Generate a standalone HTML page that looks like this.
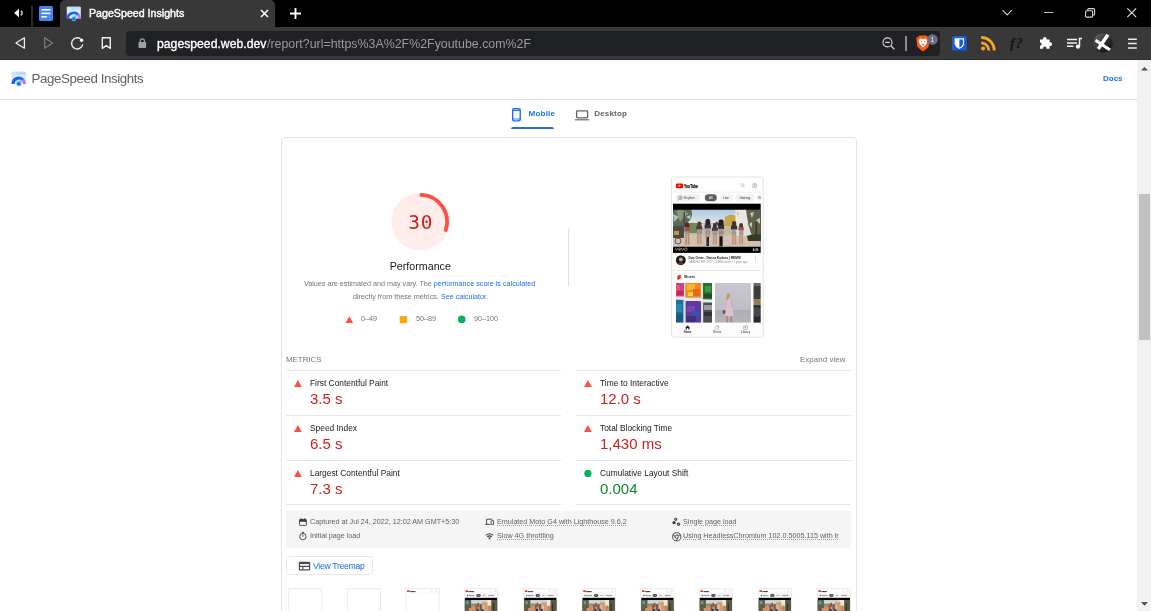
<!DOCTYPE html>
<html lang="en">
<head>
<meta charset="utf-8">
<title>PageSpeed Insights</title>
<style>
*{box-sizing:border-box;margin:0;padding:0}
html,body{width:1151px;height:611px;overflow:hidden;background:#fff}
body{position:relative;font-family:"Liberation Sans",Arial,sans-serif;color:#212121;-webkit-font-smoothing:antialiased}
.a{position:absolute;white-space:nowrap;line-height:1}
#root{position:absolute;left:0;top:0;width:1151px;height:611px;overflow:hidden;will-change:transform}
svg{position:absolute;overflow:visible}
/* browser chrome */
#tabbar{left:0;top:0;width:1151px;height:27px;background:#000}
#toolbar{left:0;top:27px;width:1151px;height:33px;background:#383838;border-bottom:1px solid #2f2f2f}
#tab{left:59.5px;top:0;width:215.5px;height:28px;background:#383838;border-radius:5px 5px 0 0}
#tabtitle{left:88.5px;top:7.5px;font-size:11.5px;color:#fff;-webkit-text-stroke:.42px #fff;transform:scaleX(.926);transform-origin:0 0}
#urlbox{left:126px;top:31px;width:814px;height:25px;background:#202124;border-radius:4px}
#urlb{left:157px;top:36.5px;font-size:13.4px;color:#fff;-webkit-text-stroke:.35px #fff;transform:scaleX(.912);transform-origin:0 0}
#url{left:266.6px;top:36.5px;font-size:13.4px;color:#9b9b9b;transform:scaleX(.925);transform-origin:0 0}
/* page */
#hdrline{left:0;top:99px;width:1137px;height:1px;background:#dadce0}
#psi{left:31.5px;top:71.5px;font-size:13.3px;color:#5f6368;letter-spacing:-.4px}
#docs{left:1103px;top:75.4px;font-size:8px;font-weight:bold;color:#1a73e8}
#sbar{left:1137px;top:60px;width:14px;height:551px;background:#f1f1f1}
#sthumb{left:1139px;top:194px;width:11px;height:146px;background:#c1c1c1}
.tabl{font-size:8px;font-weight:bold;letter-spacing:.2px}
#card{left:281px;top:137px;width:576px;height:500px;border:1px solid #e0e2e6;border-radius:4px}
.grey{color:#757575}
.lnk{color:#1a73e8}
.div{height:1px;background:#e6e6e6}
.ml{font-size:8.4px;color:#212121}
.mv{font-size:15px;color:#c7221f}
.meta{font-size:7.2px;color:#616161}
.meta u{text-decoration:underline dotted #9e9e9e;text-underline-offset:1px}
.fs{top:588px;width:34px;height:60px;border:1px solid #e4e4e4;background:#fff;overflow:hidden}
</style>
</head>
<body>
<div id="root">
<!-- ===== browser chrome ===== -->
<div class="a" id="tabbar"></div>
<div class="a" id="toolbar"></div>
<div class="a" id="tab"></div>
<div class="a" id="tabtitle">PageSpeed Insights</div>
<div class="a" id="urlbox"></div>
<div class="a" id="urlb">pagespeed.web.dev</div>
<div class="a" id="url">/report?url=https%3A%2F%2Fyoutube.com%2F</div>
<!-- speaker -->
<svg style="left:13px;top:7px" width="12" height="12" viewBox="0 0 12 12"><path d="M1.2 6 L6 1.7 V10.3 Z" fill="#fff"/><path d="M8 3.4 Q10 6 8 8.6" fill="none" stroke="#b0b0b0" stroke-width="1.7"/></svg>
<div class="a" style="left:31px;top:6px;width:2px;height:21px;background:#2b2b2b"></div>
<!-- blue doc -->
<svg style="left:39px;top:6px" width="14" height="15" viewBox="0 0 14 15"><rect width="14" height="15" rx="1.6" fill="#4285f4"/><rect x="2.4" y="3" width="9" height="1.6" fill="#fff"/><rect x="2.4" y="6.6" width="9" height="1.6" fill="#fff"/><rect x="2.4" y="10" width="5.6" height="1.6" fill="#fff"/></svg>
<!-- tab close / new tab -->
<svg style="left:260px;top:9px" width="9" height="9" viewBox="0 0 9 9"><path d="M1 1 L8 8 M8 1 L1 8" stroke="#fff" stroke-width="1.55" fill="none"/></svg>
<svg style="left:290px;top:8px" width="11" height="11" viewBox="0 0 11 11"><path d="M5.5 0 V11 M0 5.5 H11" stroke="#fff" stroke-width="1.85" fill="none"/></svg>
<!-- nav -->
<svg style="left:14px;top:36px" width="13" height="14" viewBox="0 0 13 14"><path d="M10.4 1.8 V12.2 L1.9 7 Z" fill="none" stroke="#ededed" stroke-width="1.3" stroke-linejoin="round"/></svg>
<svg style="left:43px;top:36px" width="13" height="14" viewBox="0 0 13 14"><path d="M1.6 1.8 V12.2 L9.6 7 Z" fill="none" stroke="#7c7c7c" stroke-width="1.2" stroke-linejoin="round"/></svg>
<svg style="left:70px;top:36px" width="15" height="15" viewBox="0 0 15 15"><path d="M10.4 2.7 A5.6 5.6 0 1 0 12.7 8.4" fill="none" stroke="#f0f0f0" stroke-width="1.4"/><circle cx="11.6" cy="4.2" r="1.7" fill="#fff"/></svg>
<svg style="left:101px;top:36px" width="11" height="14" viewBox="0 0 11 14"><path d="M1.3 1.7 H9.3 V12.3 L5.3 9.6 L1.3 12.3 Z" fill="none" stroke="#f0f0f0" stroke-width="1.4" stroke-linejoin="round"/></svg>
<!-- lock -->
<svg style="left:138px;top:38px" width="9" height="11" viewBox="0 0 9 11"><rect x=".5" y="4" width="7.6" height="6" rx=".8" fill="#9aa0a6"/><path d="M2.2 4.4 V3 A2.1 2.1 0 0 1 6.4 3 V4.4" fill="none" stroke="#9aa0a6" stroke-width="1.2"/></svg>
<!-- favicon -->
<svg style="left:66px;top:5.6px" width="16" height="16" viewBox="0 0 16 16"><rect x=".8" y=".8" width="14" height="11.6" rx=".8" fill="#dcebfd"/><path d="M.8 1.6 a.8 .8 0 0 1 .8 -.8 h12.4 a.8 .8 0 0 1 .8 .8 v2 h-14 z" fill="#bbd8fb"/><rect x="1.8" y="1.6" width="3" height="1" fill="#e6f1fe"/><path d="M1.7 12.9 A6.1 6.1 0 0 1 12.3 8.8" fill="none" stroke="#1a61f2" stroke-width="2.5"/><path d="M12.3 8.8 A6.1 6.1 0 0 1 13.9 12.9" fill="none" stroke="#c56cf0" stroke-width="2.5"/><path d="M7.8 10 L11 8.6 L9.8 12.4 Z" fill="#5cc6fa"/><circle cx="7.8" cy="12.9" r="2.3" fill="#4fbdf8"/><circle cx="7.8" cy="13" r="1.4" fill="#1a61f2"/></svg>
<!-- zoom-out -->
<svg style="left:881px;top:36px" width="15" height="15" viewBox="0 0 15 15"><circle cx="6.5" cy="6.4" r="4.5" fill="none" stroke="#d6d6d6" stroke-width="1.1"/><path d="M9.8 9.8 L13.4 13.3" stroke="#d6d6d6" stroke-width="1.2" fill="none"/><path d="M4.2 6.4 H8.8" stroke="#d6d6d6" stroke-width="1.2"/></svg>
<div class="a" style="left:905px;top:36px;width:1.5px;height:14.5px;background:#8c8c8c"></div>
<!-- brave -->
<svg style="left:916px;top:34.5px" width="14" height="17" viewBox="0 0 14 17"><path d="M3.2 .6 H10.8 L12.2 2.2 L13.4 2 L13.6 4.2 L12.8 11 Q12.4 12.6 7 16.6 Q1.6 12.6 1.2 11 L.4 4.2 L.6 2 L1.8 2.2 Z" fill="#ff5714"/><path d="M4.2 3.4 L7 4 L9.8 3.4 L11.4 5.4 L10.6 8.6 L8.6 11.2 L7 12.6 L5.4 11.2 L3.4 8.6 L2.6 5.4 Z" fill="#fff"/><path d="M4.4 5.6 L6 6.4 L5.4 7.6 Z M9.6 5.6 L8 6.4 L8.6 7.6 Z M7 8 L8 10 L7 11 L6 10 Z" fill="#ff5714"/></svg>
<svg style="left:927px;top:34.3px" width="11" height="11" viewBox="0 0 11 11"><circle cx="5.5" cy="5.5" r="5.3" fill="#6b6e7f"/><text x="5.4" y="8" font-size="6.6" font-family="Liberation Sans, sans-serif" fill="#f4f4f4" text-anchor="middle">1</text></svg>
<!-- bitwarden -->
<svg style="left:952px;top:36px" width="15" height="15" viewBox="0 0 15 15"><rect width="14.7" height="14.6" rx="1.6" fill="#175ddc"/><path d="M2.6 2.2 H12.1 V7.4 Q12.1 10.6 7.35 13 Q2.6 10.6 2.6 7.4 Z" fill="#fff"/><path d="M7.35 3.4 H10.9 V7.4 Q10.9 9.8 7.35 11.7 Z" fill="#175ddc"/></svg>
<!-- rss -->
<svg style="left:981px;top:36px" width="15" height="15" viewBox="0 0 15 15"><circle cx="2.1" cy="12.5" r="2" fill="#f9a426"/><path d="M.2 6.9 A7.6 7.6 0 0 1 7.8 14.5" fill="none" stroke="#f9a426" stroke-width="2.7"/><path d="M.2 1.5 A13 13 0 0 1 13.2 14.5" fill="none" stroke="#f9a426" stroke-width="2.8"/></svg>
<!-- f? -->
<div class="a" style="left:1010px;top:36.2px;font-family:'Liberation Serif',serif;font-style:italic;font-weight:bold;font-size:15px;color:#141414;letter-spacing:.5px">f?</div>
<!-- puzzle -->
<svg style="left:1039px;top:36px" width="14" height="13" viewBox="0 0 14 13"><path d="M1 3.6 H4 A1.9 1.9 0 1 1 7.6 3.6 H10.6 V6.3 A1.9 1.9 0 1 1 10.6 9.9 V12.8 H7.4 A1.7 1.7 0 1 0 4.2 12.8 H1 V9.8 A1.7 1.7 0 1 0 1 6.4 Z" fill="#fff"/></svg>
<!-- music queue -->
<svg style="left:1067px;top:37px" width="16" height="13" viewBox="0 0 16 13"><path d="M0 2.4 H10 M0 5.9 H10 M0 9.3 H6.4" stroke="#f2f2f2" stroke-width="1.5" fill="none"/><path d="M12.5 9.6 V1.5 H15" stroke="#f2f2f2" stroke-width="1.5" fill="none"/><circle cx="10.9" cy="9.7" r="2.1" fill="#f2f2f2"/></svg>
<!-- avatar -->
<svg style="left:1093px;top:33px" width="20" height="20" viewBox="0 0 20 20"><defs><linearGradient id="av" x1="0" y1="0" x2="1" y2="1"><stop offset="0" stop-color="#6a6c72"/><stop offset=".55" stop-color="#2a2c30"/><stop offset="1" stop-color="#0c0d0f"/></linearGradient><clipPath id="avc"><circle cx="10" cy="10" r="9.8"/></clipPath></defs><circle cx="10" cy="10" r="9.8" fill="url(#av)"/><g clip-path="url(#avc)"><path d="M15.4 1 L5.2 16" stroke="#fff" stroke-width="3.5"/><path d="M2.6 7.2 L17.4 17.2" stroke="#fff" stroke-width="3.1"/></g></svg>
<!-- menu -->
<svg style="left:1128px;top:38px" width="9" height="11" viewBox="0 0 9 11"><path d="M0 1.2 H8.8 M0 5.5 H8.8 M0 9.9 H8.8" stroke="#ececec" stroke-width="1.5"/></svg>
<!-- window controls -->
<svg style="left:1002px;top:9px" width="11" height="7" viewBox="0 0 11 7"><path d="M.5 1.2 L5.2 5.9 L9.9 1.2" fill="none" stroke="#cfcfcf" stroke-width="1.1"/></svg>
<div class="a" style="left:1044px;top:12.2px;width:9.4px;height:1.3px;background:#c4c4c4"></div>
<svg style="left:1085px;top:7.5px" width="11" height="10" viewBox="0 0 11 10"><rect x=".6" y="2.7" width="7" height="6.4" rx="1" fill="none" stroke="#d8d8d8" stroke-width="1.1"/><path d="M2.8 2.4 V1.6 A1 1 0 0 1 3.8 .6 H8.6 A1 1 0 0 1 9.6 1.6 V6 A1 1 0 0 1 8.6 7 H7.9" fill="none" stroke="#d8d8d8" stroke-width="1.1"/></svg>
<svg style="left:1127px;top:8px" width="10" height="10" viewBox="0 0 10 10"><path d="M.3 .3 L9.2 9.2 M9.2 .3 L.3 9.2" stroke="#e4e4e4" stroke-width="1.1" fill="none"/></svg>


<!-- ===== page header ===== -->
<div class="a" id="psi">PageSpeed Insights</div>
<div class="a" id="docs">Docs</div>
<div class="a" id="hdrline"></div>
<div class="a" id="sbar"></div>
<div class="a" id="sthumb"></div>
<!-- logo -->
<svg style="left:11px;top:71.3px" width="16" height="16" viewBox="0 0 16 16"><rect x=".8" y=".8" width="14" height="11.6" rx=".8" fill="#dcebfd"/><path d="M.8 1.6 a.8 .8 0 0 1 .8 -.8 h12.4 a.8 .8 0 0 1 .8 .8 v2 h-14 z" fill="#bbd8fb"/><rect x="1.8" y="1.6" width="3" height="1" fill="#e6f1fe"/><path d="M2 12.9 A5.8 5.8 0 0 1 12.1 9" fill="none" stroke="#1a61f2" stroke-width="3.1"/><path d="M12.1 9 A5.8 5.8 0 0 1 13.6 12.9" fill="none" stroke="#c56cf0" stroke-width="3.1"/><path d="M7.8 10 L11 8.6 L9.8 12.4 Z" fill="#5cc6fa"/><circle cx="7.8" cy="12.6" r="2.6" fill="#5cc6fa"/><circle cx="7.8" cy="12.8" r="1.6" fill="#1a61f2"/></svg>
<!-- scrollbar arrows -->
<svg style="left:1141px;top:66.5px" width="7" height="4" viewBox="0 0 7 4"><path d="M0 3.6 L3.5 0 L7 3.6 Z" fill="#505050"/></svg>
<svg style="left:1141px;top:602px" width="7" height="4" viewBox="0 0 7 4"><path d="M0 0 L3.5 3.8 L7 0 Z" fill="#505050"/></svg>
<!-- tab icons -->
<svg style="left:512px;top:107.5px" width="9" height="14" viewBox="0 0 9 14"><rect x=".7" y=".7" width="7.5" height="12.2" rx="1.3" fill="none" stroke="#1a73e8" stroke-width="1.4"/><path d="M.7 2.5 H8.2 M.7 11 H8.2" stroke="#1a73e8" stroke-width=".9"/></svg>
<svg style="left:575px;top:109.5px" width="14" height="11" viewBox="0 0 14 11"><rect x="1.6" y=".8" width="11" height="7" rx=".8" fill="none" stroke="#5f6368" stroke-width="1.3"/><path d="M0 9.8 H14.2" stroke="#5f6368" stroke-width="1.1"/></svg>


<!-- ===== tabs ===== -->
<div class="a tabl" style="left:528.6px;top:109.8px;color:#1a73e8">Mobile</div>
<div class="a tabl" style="left:594.2px;top:109.8px;color:#5f6368">Desktop</div>
<div class="a" style="left:511px;top:127px;width:43.4px;height:2px;background:#2a6fc8;border-radius:2px 2px 0 0"></div>

<!-- ===== card ===== -->
<div class="a" id="card"></div>
<svg style="left:0;top:0" width="1151" height="611" viewBox="0 0 1151 611"><circle cx="420.2" cy="221.7" r="28.8" fill="#ff4e42" fill-opacity=".1"/><path d="M421.37 194.83 A26.9 26.9 0 0 1 445.78 230.01" fill="none" stroke="#ff4e42" stroke-width="3.84" stroke-linecap="round"/>
<!-- legend shapes -->
<path d="M349.3 316.2 L353.2 323 H345.4 Z" fill="#ff4e42"/><rect x="399.7" y="316.2" width="7.2" height="7" fill="#ffa400"/><circle cx="461.7" cy="319.4" r="3.8" fill="#06b162"/>
<!-- metric icons -->
<path d="M297.9 380 L301.8 386.9 H294 Z" fill="#ff4e42"/><path d="M297.9 425 L301.8 431.9 H294 Z" fill="#ff4e42"/><path d="M297.9 470 L301.8 476.9 H294 Z" fill="#ff4e42"/>
<path d="M587.9 380 L591.8 386.9 H584 Z" fill="#ff4e42"/><path d="M587.9 425 L591.8 431.9 H584 Z" fill="#ff4e42"/><circle cx="587.9" cy="473.4" r="3.6" fill="#06b162"/>
</svg>
<div class="a" style="left:407.4px;top:212.6px;width:24.5px;text-align:center;font-family:'DejaVu Sans Mono','Liberation Mono',monospace;font-size:19.4px;letter-spacing:.8px;text-indent:.8px;color:#c7221f">30</div>

<div class="a" style="left:389.7px;top:260.8px;font-size:10.7px;color:#212121">Performance</div>
<div class="a grey" style="left:304px;top:280px;font-size:7.2px">Values are estimated and may vary. The <span class="lnk">performance score is calculated</span></div>
<div class="a grey" style="left:353px;top:293px;font-size:7.2px">directly from these metrics. <span class="lnk">See calculator.</span></div>
<div class="a grey" style="left:361px;top:315px;font-size:7.2px">0–49</div>
<div class="a grey" style="left:416px;top:315px;font-size:7.2px">50–89</div>
<div class="a grey" style="left:474px;top:315px;font-size:7.2px">90–100</div>
<div class="a" style="left:568px;top:228px;width:1px;height:58px;background:#e0e0e0"></div>
<svg style="left:0;top:0" width="1151" height="611" viewBox="0 0 1151 611">
<defs>
<filter id="b1" x="-5%" y="-5%" width="110%" height="110%"><feGaussianBlur stdDeviation=".75"/></filter>
<filter id="b2" x="-5%" y="-5%" width="110%" height="110%"><feGaussianBlur stdDeviation=".3"/></filter>
<clipPath id="vclip"><rect x="673" y="209.7" width="87.7" height="37"/></clipPath>
<clipPath id="s1clip"><rect x="676" y="283" width="36" height="39.8"/></clipPath>
<clipPath id="s2clip"><rect x="715" y="283" width="35.9" height="39.8"/></clipPath>
<clipPath id="s3clip"><rect x="753.5" y="283" width="7.2" height="39.8"/></clipPath>
<linearGradient id="sky" x1="0" y1="0" x2="0" y2="1"><stop offset="0" stop-color="#a9cde6"/><stop offset="1" stop-color="#e6e9e4"/></linearGradient>
<linearGradient id="s2bg" x1="0" y1="0" x2="0" y2="1"><stop offset="0" stop-color="#c9c7d2"/><stop offset=".66" stop-color="#bfbdc6"/><stop offset=".67" stop-color="#aeacb4"/><stop offset="1" stop-color="#b9b6bb"/></linearGradient>
</defs>
<rect x="671.5" y="177" width="91.7" height="160.2" rx="2" fill="#fff" stroke="#e3e3e3" stroke-width="1"/>
<!-- yt header -->
<rect x="676" y="183.4" width="7" height="4.8" rx="1.3" fill="#f00"/><path d="M678.7 184.6 L681 185.8 L678.7 187 Z" fill="#fff"/>
<text x="684" y="188" font-family="Liberation Sans, sans-serif" font-weight="bold" font-size="5.2" fill="#1c1c1c" stroke="#1c1c1c" stroke-width=".25" textLength="14" lengthAdjust="spacingAndGlyphs">YouTube</text>
<circle cx="742.4" cy="185.2" r="1.5" fill="none" stroke="#9a9a9a" stroke-width=".5"/><path d="M743.5 186.3 L744.8 187.6" stroke="#9a9a9a" stroke-width=".5"/>
<circle cx="754.7" cy="185.6" r="2.3" fill="none" stroke="#8a8a8a" stroke-width=".5"/><circle cx="754.7" cy="184.9" r=".8" fill="#9a9a9a"/><path d="M753.1 187.2 Q754.7 185.6 756.3 187.2" fill="none" stroke="#9a9a9a" stroke-width=".5"/>
<rect x="673" y="191.8" width="87.7" height=".7" fill="#e6e6e6"/>
<!-- chips -->
<rect x="676" y="194.3" width="23.6" height="6.9" rx="1" fill="#f0f0f0"/><circle cx="680.4" cy="197.8" r="1.9" fill="none" stroke="#555" stroke-width=".5"/><path d="M679.6 198.6 L680 197.4 L681.2 197 L680.8 198.2 Z" fill="#555"/>
<text x="684.3" y="198.9" font-family="Liberation Sans, sans-serif" font-size="3.1" fill="#444">Explore</text>
<rect x="704.8" y="194.3" width="12" height="6.9" rx="3.45" fill="#5f5f5f"/><text x="710.8" y="198.9" font-family="Liberation Sans, sans-serif" font-size="3.1" fill="#fff" text-anchor="middle">All</text>
<rect x="719.6" y="194.4" width="12.9" height="6.7" rx="3.35" fill="#f2f2f2" stroke="#e6e6e6" stroke-width=".3"/><text x="726" y="198.9" font-family="Liberation Sans, sans-serif" font-size="3.1" fill="#333" text-anchor="middle">Live</text>
<rect x="735.4" y="194.4" width="18.7" height="6.7" rx="3.35" fill="#f2f2f2" stroke="#e6e6e6" stroke-width=".3"/><text x="744.8" y="198.9" font-family="Liberation Sans, sans-serif" font-size="3.1" fill="#333" text-anchor="middle">Gaming</text>
<path d="M760.7 194.4 H760 A3.3 3.3 0 0 0 760 201.1 H760.7 Z" fill="#f0f0f0"/><text x="758.6" y="198.9" font-family="Liberation Sans, sans-serif" font-size="3.1" fill="#444">N</text>
<!-- video -->
<rect x="673" y="203.7" width="87.7" height="49.2" fill="#000"/>
<g clip-path="url(#vclip)"><g filter="url(#b1)">
<rect x="672" y="209" width="90" height="39" fill="#c6b2a3"/>
<rect x="672" y="209" width="90" height="17" fill="url(#sky)"/>
<rect x="672" y="223" width="90" height="12" fill="#c2b8a0"/><path d="M686 224 Q694 221 702 225 V233 H686 Z" fill="#7d8458"/><rect x="700" y="224" width="26" height="4" fill="#d9d2c4"/>
<rect x="672" y="234.5" width="90" height="14" fill="#d2c0b2"/>
<!-- left palms -->
<path d="M672 209 H691 Q693.5 215 690 220 Q686 224 684 228 L672 232 Z" fill="#5d6a58"/><path d="M676 211 Q682 208 689 214 Q684 216 680 222 Z" fill="#8a987a"/><path d="M673 214 L679 217 L674 222 Z" fill="#a9c0c4"/><path d="M686 217 L690.5 215 L690 219 Z" fill="#b9d0dc"/><rect x="683.6" y="212" width="1.4" height="14" fill="#4a4638"/>
<rect x="672" y="226" width="12" height="12" fill="#4d4a44"/><rect x="674" y="231" width="5" height="4" fill="#b59a3a"/>
<circle cx="678" cy="241" r="3" fill="none" stroke="#3a3733" stroke-width=".8"/>
<!-- yellow trees -->
<path d="M725 217 Q730 213 736 216 V226 H724 Z" fill="#c6a54c"/>
<!-- building & right trees -->
<rect x="735.5" y="209" width="12" height="26.5" fill="#e9e7e1"/><rect x="737" y="212" width="1.2" height="3" fill="#b9b6ae"/><rect x="742" y="226" width="14" height="9" fill="#e2dfd9"/>
<path d="M746 210 Q752 208 762 210 V236 H752 Q748 226 746 210 Z" fill="#5f6046"/><path d="M750 213 L754 212 L752 218 Z M756 220 L760 218 L760 224 Z M749 224 L752 222 L752 228 Z" fill="#c8c6b4"/><rect x="755.5" y="222" width="1.6" height="14" fill="#3a3628"/>
<path d="M747 236 Q752 233.5 762 234.5 V241 H748 Z" fill="#323c22"/>
<!-- dancers -->
<g>
<rect x="685" y="222.5" width="4.4" height="6" rx="2" fill="#4a2c26"/><rect x="684.4" y="227" width="5.6" height="4.6" fill="#a8553f"/><rect x="685" y="231.4" width="4.6" height="3" fill="#8d99ab"/><rect x="685.2" y="234.2" width="1.7" height="10.5" fill="#b98a70"/><rect x="687.7" y="234.2" width="1.7" height="10.5" fill="#b98a70"/>
<rect x="697.2" y="221.5" width="4.2" height="6.5" rx="2" fill="#5a3c2e"/><rect x="696.4" y="226" width="5.8" height="3.6" fill="#3a3f4c"/><rect x="697.2" y="229.4" width="4.2" height="2.2" fill="#c29578"/><rect x="697" y="231.4" width="4.6" height="2.8" fill="#8d99ab"/><rect x="697.2" y="234" width="1.7" height="10.5" fill="#c0917a"/><rect x="699.7" y="234" width="1.7" height="10.5" fill="#c0917a"/>
<rect x="705.4" y="219" width="4.8" height="8" rx="2" fill="#2e2020"/><rect x="704.6" y="224.6" width="6.2" height="4" fill="#3a3340"/><rect x="705.6" y="228.4" width="4.2" height="2.4" fill="#bd8e74"/><rect x="705.3" y="230.6" width="4.8" height="2.8" fill="#8d99ab"/><rect x="705.6" y="233.2" width="1.8" height="4" fill="#b98a70"/><rect x="708" y="233.2" width="1.8" height="4" fill="#b98a70"/><rect x="706.4" y="237" width="2.6" height="9" fill="#2c2a30"/>
<rect x="713" y="223" width="3.8" height="5.4" rx="1.9" fill="#3e2a26"/><rect x="712" y="227.4" width="5.8" height="3.6" fill="#3b4250"/><rect x="712.8" y="230.8" width="4.2" height="2" fill="#c29578"/><rect x="712.6" y="232.6" width="4.6" height="2.6" fill="#8d99ab"/><rect x="712.9" y="235" width="1.6" height="9.6" fill="#c0917a"/><rect x="715.3" y="235" width="1.6" height="9.6" fill="#c0917a"/>
<rect x="718.6" y="219.4" width="5" height="8.4" rx="2" fill="#261a1e"/><path d="M716.4 221.6 L719.6 224.6 L718.6 226.2 L715.6 222.8 Z" fill="#2a2c38"/><rect x="718.2" y="225" width="6" height="4" fill="#2a2c38"/><rect x="719" y="228.8" width="4.4" height="2.6" fill="#bd8e74"/><rect x="718.8" y="231.2" width="4.8" height="2.8" fill="#7f8aa0"/><rect x="719" y="233.8" width="1.8" height="3" fill="#b98a70"/><rect x="721.4" y="233.8" width="1.8" height="3" fill="#b98a70"/><rect x="719.4" y="236.4" width="3.2" height="10" fill="#17161c"/>
<rect x="732" y="221" width="4.2" height="6.4" rx="2" fill="#4a3026"/><rect x="731" y="225.6" width="6.2" height="4" fill="#2f3442"/><rect x="732" y="229.4" width="4.2" height="2.2" fill="#c29578"/><rect x="731.8" y="231.4" width="4.6" height="2.8" fill="#8d99ab"/><rect x="732" y="234" width="1.7" height="10.8" fill="#c0917a"/><rect x="734.5" y="234" width="1.7" height="10.8" fill="#c0917a"/>
<rect x="739.2" y="223" width="3.8" height="5.6" rx="1.9" fill="#55302a"/><rect x="738.4" y="227.2" width="5.4" height="3.4" fill="#9a5a48"/><rect x="739" y="230.4" width="4.2" height="2" fill="#c29578"/><rect x="738.9" y="232.2" width="4.4" height="2.6" fill="#8d99ab"/><rect x="739.2" y="234.6" width="1.5" height="9.8" fill="#c0917a"/><rect x="741.5" y="234.6" width="1.5" height="9.8" fill="#c0917a"/>
</g>
</g></g>
<path d="M675.2 248 L676.4 250.6 L677.8 248 M678.6 249.4 H680.6 Q680.6 248 679.6 248 Q678.5 248 678.6 249.6 Q678.8 250.8 680.4 250.5 M681.4 248 L682.6 250.6 L683.8 248 M685.8 248 A1.3 1.3 0 1 0 685.9 250.6 A1.3 1.3 0 1 0 685.8 248" fill="none" stroke="#e6e6e6" stroke-width=".5"/>
<text x="752.8" y="251.1" font-family="Liberation Sans, sans-serif" font-weight="bold" font-size="2.8" fill="#e8e8e8">4:20</text>
<!-- video meta -->
<circle cx="680.8" cy="260.3" r="4.9" fill="#1d1a1a"/><circle cx="680.9" cy="259.6" r="2" fill="#b8a8a2"/><path d="M677.6 263.6 Q680.8 261 684 263.6 Q680.8 266 677.6 263.6 Z" fill="#7a2a28"/>
<text x="688.4" y="258.9" font-family="Liberation Sans, sans-serif" font-weight="bold" font-size="3.2" fill="#1a1a1a" textLength="52.4" lengthAdjust="spacingAndGlyphs">Don Omar - Danza Kuduro | REMIX</text>
<text x="688.4" y="263.4" font-family="Liberation Sans, sans-serif" font-size="2.9" fill="#8c8c8c" textLength="59.2" lengthAdjust="spacingAndGlyphs">GANGSTER CITY • 139M views • 1 year ago</text>
<circle cx="755.5" cy="256.8" r=".4" fill="#666"/><circle cx="755.5" cy="258.4" r=".4" fill="#666"/><circle cx="755.5" cy="260" r=".4" fill="#666"/>
<rect x="673" y="270" width="87.7" height=".9" fill="#e2e2e2"/>
<!-- shorts -->
<path d="M679.8 274.8 L677.4 276.1 Q676.6 276.8 677.2 277.6 L677.8 277.9 L677.3 278.3 Q676.7 279 677.4 279.6 Q678.1 280 678.8 279.5 L680.8 278.3 Q681.5 277.7 681 276.9 L680.4 276.6 L680.8 276.2 Q681.4 275.5 680.7 274.9 Q680.2 274.6 679.8 274.8 Z" fill="#f4331f"/>
<text x="684" y="278.4" font-family="Liberation Sans, sans-serif" font-weight="bold" font-size="3.5" fill="#222">Shorts</text>
<g clip-path="url(#s1clip)"><g filter="url(#b1)">
<rect x="675" y="282" width="38" height="42" fill="#dfe1e3"/>
<rect x="675" y="282" width="9" height="14.4" fill="#d33f78"/><rect x="675" y="285" width="5" height="5" fill="#e8557a"/><rect x="677" y="291" width="6" height="4" fill="#b82a5a"/>
<rect x="685.4" y="282" width="15.6" height="15.6" fill="#f08a1c"/><rect x="687" y="284" width="8" height="6" fill="#f4b92a"/><rect x="693" y="289" width="7" height="7" fill="#e9691c"/><rect x="688" y="292" width="5" height="4" fill="#f6d23a"/>
<rect x="703" y="282" width="10" height="17.4" fill="#256f33"/><rect x="705" y="286" width="6" height="6" fill="#3f9a42"/><rect x="704" y="294" width="8" height="4" fill="#1d4f2a"/>
<rect x="675" y="299.5" width="8.4" height="24" fill="#1c6f9e"/><rect x="676" y="304" width="6" height="8" fill="#2289b5"/><rect x="675" y="314" width="8" height="9" fill="#155a86"/>
<rect x="685.6" y="301" width="15.4" height="22" fill="#5b3a9a"/><rect x="687" y="306" width="8" height="6" fill="#7a44b4"/><rect x="692" y="311" width="8" height="6" fill="#3b4fb0"/><rect x="686" y="316" width="10" height="6" fill="#43307a"/>
<rect x="703.2" y="302.5" width="10" height="21" fill="#4c4e52"/><rect x="704" y="305" width="8" height="5" fill="#9a9ca0"/><rect x="704" y="312" width="8" height="4" fill="#2e3034"/>
<path d="M675 297.2 L713 300.2 V302.2 L675 299.2 Z" fill="#e8eaec"/>
</g></g>
<g clip-path="url(#s2clip)"><g filter="url(#b2)">
<rect x="714" y="282" width="38" height="42" fill="url(#s2bg)"/>
<ellipse cx="728.4" cy="295.6" rx="1.9" ry="2.4" fill="#c39a6a"/><path d="M727 296 Q726 300 727.4 302 L729 299 Z" fill="#b98d5c"/>
<path d="M727.6 299 Q731 298.4 732 301 L733.6 316 Q729 318 724.8 316 L726.6 305 Z" fill="#d9c1d0"/>
<path d="M731.4 300 L732.8 307 L731.8 307.2 L730.6 301 Z" fill="#d2a284"/>
<rect x="726.2" y="316" width="1.9" height="7" fill="#b48a70"/><rect x="730.2" y="316" width="1.9" height="7" fill="#b48a70"/>
<ellipse cx="724" cy="312" rx="1.6" ry="2" fill="#6a5a58"/>
</g></g>
<g clip-path="url(#s3clip)"><g filter="url(#b2)">
<rect x="753" y="282" width="9" height="42" fill="#3c3c3c"/><rect x="753" y="282" width="9" height="4" fill="#6a6a68"/><rect x="753" y="299" width="9" height="6.4" fill="#9a7a55"/><rect x="753" y="305.4" width="9" height="19" fill="#2b2b2c"/><ellipse cx="757" cy="312" rx="4" ry="5" fill="#47474a"/>
</g></g>
<!-- bottom nav -->
<rect x="673" y="322.8" width="87.7" height="12.6" fill="#fcfcfc"/>
<path d="M685.7 327.2 L687.6 325.4 L689.5 327.2 V329.6 H688.3 V328 H686.9 V329.6 H685.7 Z" fill="#1c1c1c"/>
<rect x="715.6" y="326.2" width="2.8" height="3.2" rx=".5" fill="none" stroke="#8a8a8a" stroke-width=".45"/><path d="M716.4 325.6 H718.8 V328.4" fill="none" stroke="#9a9a9a" stroke-width=".4"/>
<rect x="743.8" y="325.8" width="3.6" height="3.6" rx=".4" fill="none" stroke="#7a7a7a" stroke-width=".5"/><path d="M745 326.8 L746.4 327.6 L745 328.4 Z" fill="#7a7a7a"/>
<text x="687.6" y="332.5" font-family="Liberation Sans, sans-serif" font-size="2.7" font-weight="bold" fill="#222" text-anchor="middle">Home</text>
<text x="717" y="332.5" font-family="Liberation Sans, sans-serif" font-size="2.7" font-weight="bold" fill="#6a6a6a" text-anchor="middle">Shorts</text>
<text x="745.6" y="332.5" font-family="Liberation Sans, sans-serif" font-size="2.7" font-weight="bold" fill="#6a6a6a" text-anchor="middle">Library</text>
</svg>


<!-- ===== metrics ===== -->
<div class="a grey" style="left:286px;top:355.8px;font-size:7.9px">METRICS</div>
<div class="a grey" style="left:800px;top:355.8px;font-size:7.9px;letter-spacing:.07px">Expand view</div>
<div class="a div" style="left:286px;top:370px;width:275px"></div>
<div class="a div" style="left:576px;top:370px;width:275px"></div>
<div class="a div" style="left:286px;top:415px;width:275px"></div>
<div class="a div" style="left:576px;top:415px;width:275px"></div>
<div class="a div" style="left:286px;top:460px;width:275px"></div>
<div class="a div" style="left:576px;top:460px;width:275px"></div>
<div class="a div" style="left:286px;top:504px;width:275px"></div>
<div class="a div" style="left:576px;top:504px;width:275px"></div>

<div class="a ml" style="left:310px;top:379px">First Contentful Paint</div>
<div class="a mv" style="left:310px;top:391px">3.5 s</div>
<div class="a ml" style="left:310px;top:424px">Speed Index</div>
<div class="a mv" style="left:310px;top:436px">6.5 s</div>
<div class="a ml" style="left:310px;top:469px">Largest Contentful Paint</div>
<div class="a mv" style="left:310px;top:481px">7.3 s</div>
<div class="a ml" style="left:600px;top:379px">Time to Interactive</div>
<div class="a mv" style="left:600px;top:391px">12.0 s</div>
<div class="a ml" style="left:600px;top:424px">Total Blocking Time</div>
<div class="a mv" style="left:600px;top:436px">1,430 ms</div>
<div class="a ml" style="left:600px;top:469px">Cumulative Layout Shift</div>
<div class="a mv" style="left:600px;top:481px;color:#0b8a2c">0.004</div>
<!-- METRIC-ICONS -->

<!-- ===== meta box ===== -->
<div class="a" style="left:286px;top:510.6px;width:564.6px;height:37.4px;background:#f5f5f5;border-radius:2px"></div>
<div class="a meta" style="left:310px;top:518px">Captured at Jul 24, 2022, 12:02 AM GMT+5:30</div>
<div class="a meta" style="left:310px;top:532px">Initial page load</div>
<div class="a meta" style="left:497px;top:518px"><u>Emulated Moto G4 with Lighthouse 9.6.2</u></div>
<div class="a meta" style="left:497px;top:532px"><u>Slow 4G throttling</u></div>
<div class="a meta" style="left:683px;top:518px"><u>Single page load</u></div>
<div class="a meta" style="left:683px;top:532px"><u>Using HeadlessChromium 102.0.5005.115 with lr</u></div>
<svg style="left:0;top:0" width="1151" height="611" viewBox="0 0 1151 611" fill="none" stroke="#3c3c3c">
<!-- calendar -->
<rect x="299.5" y="519.6" width="6.9" height="5.8" rx=".6" stroke-width=".9"/><rect x="299.5" y="519.4" width="6.9" height="2.4" fill="#3c3c3c" stroke="none"/><path d="M301.1 518.2 V520 M304.8 518.2 V520" stroke-width="1"/>
<!-- timer -->
<circle cx="302.9" cy="536.6" r="3.2" stroke-width=".9"/><path d="M302.9 534.6 V536.8 M301.7 532.4 H304.1" stroke-width=".9"/>
<!-- devices -->
<path d="M486.6 524 V519.2 H492.4 M485.2 524.4 H490.6" stroke-width=".9"/><rect x="491.1" y="520.6" width="2.5" height="4" rx=".3" stroke-width=".8"/>
<!-- wifi -->
<path d="M485.9 535.4 Q489.5 532.2 493.1 535.4" stroke-width="1.1"/><path d="M487.2 536.9 Q489.5 534.9 491.8 536.9" stroke-width="1.1"/><path d="M488 537.4 L489.5 539.6 L491 537.4 Z" fill="#3c3c3c" stroke="none"/>
<!-- samples -->
<circle cx="675.7" cy="519.3" r="1.2" stroke-width=".9" fill="#9a9a9a"/><circle cx="674" cy="522.7" r="1.6" fill="#3c3c3c" stroke="none"/><circle cx="678.6" cy="524.2" r="1.3" stroke-width="1" fill="#8a8a8a"/>
<!-- chrome -->
<circle cx="676.7" cy="536.8" r="4.1" stroke-width=".9"/><circle cx="676.7" cy="536.8" r="1.6" stroke-width=".8"/><path d="M676.7 535.2 H680.4 M675.3 537.6 L673.4 534.4 M678.1 537.6 L676.3 540.8" stroke-width=".8"/>
</svg>


<!-- ===== treemap button ===== -->
<div class="a" style="left:286px;top:556px;width:86.6px;height:18.8px;border:1px solid #e8e8e8;border-radius:2.5px;background:#fff"></div>
<div class="a" style="left:313px;top:561.8px;font-size:8.7px;color:#1a6fe0;letter-spacing:-.32px">View Treemap</div>

<svg style="left:0;top:0" width="1151" height="611" viewBox="0 0 1151 611" fill="none"><rect x="299.4" y="562.4" width="10.2" height="7.5" rx=".4" stroke="#4c4c4c" stroke-width="1.2"/><path d="M299.4 563.2 H309.6" stroke="#4c4c4c" stroke-width="1.8"/><path d="M299.4 566.3 H309.6 M302.8 566 V569.8" stroke="#4c4c4c" stroke-width="1.2"/>
</svg>
<!-- ===== filmstrip ===== -->
<svg style="left:0;top:0" width="1151" height="611" viewBox="0 0 1151 611">
<defs><filter id="b3" x="-5%" y="-5%" width="110%" height="110%"><feGaussianBlur stdDeviation=".45"/></filter><linearGradient id="sky2" x1="0" y1="0" x2="0" y2="1"><stop offset="0" stop-color="#b3cddd"/><stop offset="1" stop-color="#e2e2dc"/></linearGradient></defs>
<g transform="translate(288.2 588.2)"><rect x=".5" y=".5" width="33.2" height="30" fill="#fff" stroke="#ececec" stroke-width="1"/></g>
<g transform="translate(346.8 588.2)"><rect x=".5" y=".5" width="33.2" height="30" fill="#fff" stroke="#ececec" stroke-width="1"/></g>
<g transform="translate(405.4 588.2)"><rect x=".5" y=".5" width="33.2" height="30" fill="#fff" stroke="#ececec" stroke-width="1"/><rect x="1.6" y="2" width="2.6" height="1.8" rx=".5" fill="#f4311c"/><text x="4.6" y="3.8" font-family="Liberation Sans, sans-serif" font-weight="bold" font-size="2.3" fill="#222" stroke="#222" stroke-width=".25" textLength="5.4" lengthAdjust="spacingAndGlyphs">YouTube</text><rect x="1" y="4.7" width="32.2" height=".4" fill="#ececec"/><circle cx="26.4" cy="2.9" r=".6" fill="none" stroke="#c9c9c9" stroke-width=".3"/><circle cx="30.9" cy="2.9" r=".8" fill="none" stroke="#bdbdbd" stroke-width=".3"/></g>
<g transform="translate(463.9 588.2)"><rect x=".5" y=".5" width="33.2" height="30" fill="#fff" stroke="#ececec" stroke-width="1"/><rect x="1.6" y="2" width="2.6" height="1.8" rx=".5" fill="#f4311c"/><text x="4.6" y="3.8" font-family="Liberation Sans, sans-serif" font-weight="bold" font-size="2.3" fill="#222" stroke="#222" stroke-width=".25" textLength="5.4" lengthAdjust="spacingAndGlyphs">YouTube</text><rect x="1" y="4.7" width="32.2" height=".4" fill="#ececec"/><circle cx="26.4" cy="2.9" r=".6" fill="none" stroke="#c9c9c9" stroke-width=".3"/><circle cx="30.9" cy="2.9" r=".8" fill="none" stroke="#bdbdbd" stroke-width=".3"/><rect x="1" y="4.7" width="32.2" height=".4" fill="#ececec"/><rect x="2.2" y="6" width="8" height="2.6" rx=".5" fill="#ededed"/><circle cx="3.6" cy="7.3" r=".7" fill="#666"/><text x="5" y="8" font-family="Liberation Sans, sans-serif" font-size="1.6" font-weight="bold" fill="#444">Explore</text><rect x="12.4" y="5.9" width="4.4" height="2.8" rx="1.4" fill="#4f4f4f"/><text x="14.6" y="8" font-family="Liberation Sans, sans-serif" font-size="1.6" fill="#fff" text-anchor="middle">All</text><rect x="17.9" y="6" width="4.8" height="2.6" rx="1.3" fill="#efefef"/><text x="20.3" y="8" font-family="Liberation Sans, sans-serif" font-size="1.6" fill="#555" text-anchor="middle">Live</text><rect x="23.8" y="6" width="7" height="2.6" rx="1.3" fill="#efefef"/><text x="27.3" y="8" font-family="Liberation Sans, sans-serif" font-size="1.6" font-weight="bold" fill="#555" text-anchor="middle">Gaming</text><rect x="1" y="9.6" width="32.2" height="14" fill="#000"/><g filter="url(#b3)"><rect x="1" y="11.8" width="32.2" height="12" fill="#c79676"/><rect x="6.5" y="11.8" width="17" height="3.6" fill="url(#sky2)"/><rect x="1" y="11.8" width="6.2" height="8" fill="#4f6558"/><rect x="1" y="17" width="4" height="6" fill="#6a5a40"/><rect x="2.2" y="13" width="2.4" height="3" fill="#7f9a86"/><rect x="23.2" y="11.8" width="4.4" height="6" fill="#ece6dc"/><rect x="27.4" y="11.8" width="5.8" height="11" fill="#5a5a40"/><rect x="29" y="15" width="1" height="8" fill="#2f2f22"/><rect x="18" y="14" width="5.6" height="2.4" fill="#d4a452"/><rect x="7" y="15.4" width="7" height="3" fill="#9a8a62"/><rect x="8.6" y="17" width="1.8" height="6" fill="#d98a58"/><rect x="11.8" y="16.6" width="1.8" height="6" fill="#8a5a48"/><rect x="13.6" y="14.6" width="1.6" height="4" fill="#a04a3a"/><rect x="15.8" y="16" width="2" height="6" fill="#5a5a6a"/><rect x="18.6" y="16.6" width="2.2" height="6" fill="#e0b89c"/><rect x="22" y="16.4" width="1.8" height="6" fill="#d9a080"/><rect x="24.6" y="17.4" width="1.8" height="5" fill="#b8826a"/><rect x="12.8" y="21" width="2" height="2" fill="#2a2a30"/><rect x="17.6" y="21" width="2" height="2" fill="#2a2a30"/></g></g>
<g transform="translate(523.2 588.2)"><rect x=".5" y=".5" width="33.2" height="30" fill="#fff" stroke="#ececec" stroke-width="1"/><rect x="1.6" y="2" width="2.6" height="1.8" rx=".5" fill="#f4311c"/><text x="4.6" y="3.8" font-family="Liberation Sans, sans-serif" font-weight="bold" font-size="2.3" fill="#222" stroke="#222" stroke-width=".25" textLength="5.4" lengthAdjust="spacingAndGlyphs">YouTube</text><rect x="1" y="4.7" width="32.2" height=".4" fill="#ececec"/><circle cx="26.4" cy="2.9" r=".6" fill="none" stroke="#c9c9c9" stroke-width=".3"/><circle cx="30.9" cy="2.9" r=".8" fill="none" stroke="#bdbdbd" stroke-width=".3"/><rect x="1" y="4.7" width="32.2" height=".4" fill="#ececec"/><rect x="2.2" y="6" width="8" height="2.6" rx=".5" fill="#ededed"/><circle cx="3.6" cy="7.3" r=".7" fill="#666"/><text x="5" y="8" font-family="Liberation Sans, sans-serif" font-size="1.6" font-weight="bold" fill="#444">Explore</text><rect x="12.4" y="5.9" width="4.4" height="2.8" rx="1.4" fill="#4f4f4f"/><text x="14.6" y="8" font-family="Liberation Sans, sans-serif" font-size="1.6" fill="#fff" text-anchor="middle">All</text><rect x="17.9" y="6" width="4.8" height="2.6" rx="1.3" fill="#efefef"/><text x="20.3" y="8" font-family="Liberation Sans, sans-serif" font-size="1.6" fill="#555" text-anchor="middle">Live</text><rect x="23.8" y="6" width="7" height="2.6" rx="1.3" fill="#efefef"/><text x="27.3" y="8" font-family="Liberation Sans, sans-serif" font-size="1.6" font-weight="bold" fill="#555" text-anchor="middle">Gaming</text><rect x="1" y="9.6" width="32.2" height="14" fill="#000"/><g filter="url(#b3)"><rect x="1" y="11.8" width="32.2" height="12" fill="#c79676"/><rect x="6.5" y="11.8" width="17" height="3.6" fill="url(#sky2)"/><rect x="1" y="11.8" width="6.2" height="8" fill="#4f6558"/><rect x="1" y="17" width="4" height="6" fill="#6a5a40"/><rect x="2.2" y="13" width="2.4" height="3" fill="#7f9a86"/><rect x="23.2" y="11.8" width="4.4" height="6" fill="#ece6dc"/><rect x="27.4" y="11.8" width="5.8" height="11" fill="#5a5a40"/><rect x="29" y="15" width="1" height="8" fill="#2f2f22"/><rect x="18" y="14" width="5.6" height="2.4" fill="#d4a452"/><rect x="7" y="15.4" width="7" height="3" fill="#9a8a62"/><rect x="8.6" y="17" width="1.8" height="6" fill="#d98a58"/><rect x="11.8" y="16.6" width="1.8" height="6" fill="#8a5a48"/><rect x="13.6" y="14.6" width="1.6" height="4" fill="#a04a3a"/><rect x="15.8" y="16" width="2" height="6" fill="#5a5a6a"/><rect x="18.6" y="16.6" width="2.2" height="6" fill="#e0b89c"/><rect x="22" y="16.4" width="1.8" height="6" fill="#d9a080"/><rect x="24.6" y="17.4" width="1.8" height="5" fill="#b8826a"/><rect x="12.8" y="21" width="2" height="2" fill="#2a2a30"/><rect x="17.6" y="21" width="2" height="2" fill="#2a2a30"/></g></g>
<g transform="translate(581.6 588.2)"><rect x=".5" y=".5" width="33.2" height="30" fill="#fff" stroke="#ececec" stroke-width="1"/><rect x="1.6" y="2" width="2.6" height="1.8" rx=".5" fill="#f4311c"/><text x="4.6" y="3.8" font-family="Liberation Sans, sans-serif" font-weight="bold" font-size="2.3" fill="#222" stroke="#222" stroke-width=".25" textLength="5.4" lengthAdjust="spacingAndGlyphs">YouTube</text><rect x="1" y="4.7" width="32.2" height=".4" fill="#ececec"/><circle cx="26.4" cy="2.9" r=".6" fill="none" stroke="#c9c9c9" stroke-width=".3"/><circle cx="30.9" cy="2.9" r=".8" fill="none" stroke="#bdbdbd" stroke-width=".3"/><rect x="1" y="4.7" width="32.2" height=".4" fill="#ececec"/><rect x="2.2" y="6" width="8" height="2.6" rx=".5" fill="#ededed"/><circle cx="3.6" cy="7.3" r=".7" fill="#666"/><text x="5" y="8" font-family="Liberation Sans, sans-serif" font-size="1.6" font-weight="bold" fill="#444">Explore</text><rect x="12.4" y="5.9" width="4.4" height="2.8" rx="1.4" fill="#4f4f4f"/><text x="14.6" y="8" font-family="Liberation Sans, sans-serif" font-size="1.6" fill="#fff" text-anchor="middle">All</text><rect x="17.9" y="6" width="4.8" height="2.6" rx="1.3" fill="#efefef"/><text x="20.3" y="8" font-family="Liberation Sans, sans-serif" font-size="1.6" fill="#555" text-anchor="middle">Live</text><rect x="23.8" y="6" width="7" height="2.6" rx="1.3" fill="#efefef"/><text x="27.3" y="8" font-family="Liberation Sans, sans-serif" font-size="1.6" font-weight="bold" fill="#555" text-anchor="middle">Gaming</text><rect x="1" y="9.6" width="32.2" height="14" fill="#000"/><g filter="url(#b3)"><rect x="1" y="11.8" width="32.2" height="12" fill="#c79676"/><rect x="6.5" y="11.8" width="17" height="3.6" fill="url(#sky2)"/><rect x="1" y="11.8" width="6.2" height="8" fill="#4f6558"/><rect x="1" y="17" width="4" height="6" fill="#6a5a40"/><rect x="2.2" y="13" width="2.4" height="3" fill="#7f9a86"/><rect x="23.2" y="11.8" width="4.4" height="6" fill="#ece6dc"/><rect x="27.4" y="11.8" width="5.8" height="11" fill="#5a5a40"/><rect x="29" y="15" width="1" height="8" fill="#2f2f22"/><rect x="18" y="14" width="5.6" height="2.4" fill="#d4a452"/><rect x="7" y="15.4" width="7" height="3" fill="#9a8a62"/><rect x="8.6" y="17" width="1.8" height="6" fill="#d98a58"/><rect x="11.8" y="16.6" width="1.8" height="6" fill="#8a5a48"/><rect x="13.6" y="14.6" width="1.6" height="4" fill="#a04a3a"/><rect x="15.8" y="16" width="2" height="6" fill="#5a5a6a"/><rect x="18.6" y="16.6" width="2.2" height="6" fill="#e0b89c"/><rect x="22" y="16.4" width="1.8" height="6" fill="#d9a080"/><rect x="24.6" y="17.4" width="1.8" height="5" fill="#b8826a"/><rect x="12.8" y="21" width="2" height="2" fill="#2a2a30"/><rect x="17.6" y="21" width="2" height="2" fill="#2a2a30"/></g></g>
<g transform="translate(640.3 588.2)"><rect x=".5" y=".5" width="33.2" height="30" fill="#fff" stroke="#ececec" stroke-width="1"/><rect x="1.6" y="2" width="2.6" height="1.8" rx=".5" fill="#f4311c"/><text x="4.6" y="3.8" font-family="Liberation Sans, sans-serif" font-weight="bold" font-size="2.3" fill="#222" stroke="#222" stroke-width=".25" textLength="5.4" lengthAdjust="spacingAndGlyphs">YouTube</text><rect x="1" y="4.7" width="32.2" height=".4" fill="#ececec"/><circle cx="26.4" cy="2.9" r=".6" fill="none" stroke="#c9c9c9" stroke-width=".3"/><circle cx="30.9" cy="2.9" r=".8" fill="none" stroke="#bdbdbd" stroke-width=".3"/><rect x="1" y="4.7" width="32.2" height=".4" fill="#ececec"/><rect x="2.2" y="6" width="8" height="2.6" rx=".5" fill="#ededed"/><circle cx="3.6" cy="7.3" r=".7" fill="#666"/><text x="5" y="8" font-family="Liberation Sans, sans-serif" font-size="1.6" font-weight="bold" fill="#444">Explore</text><rect x="12.4" y="5.9" width="4.4" height="2.8" rx="1.4" fill="#4f4f4f"/><text x="14.6" y="8" font-family="Liberation Sans, sans-serif" font-size="1.6" fill="#fff" text-anchor="middle">All</text><rect x="17.9" y="6" width="4.8" height="2.6" rx="1.3" fill="#efefef"/><text x="20.3" y="8" font-family="Liberation Sans, sans-serif" font-size="1.6" fill="#555" text-anchor="middle">Live</text><rect x="23.8" y="6" width="7" height="2.6" rx="1.3" fill="#efefef"/><text x="27.3" y="8" font-family="Liberation Sans, sans-serif" font-size="1.6" font-weight="bold" fill="#555" text-anchor="middle">Gaming</text><rect x="1" y="9.6" width="32.2" height="14" fill="#000"/><g filter="url(#b3)"><rect x="1" y="11.8" width="32.2" height="12" fill="#c79676"/><rect x="6.5" y="11.8" width="17" height="3.6" fill="url(#sky2)"/><rect x="1" y="11.8" width="6.2" height="8" fill="#4f6558"/><rect x="1" y="17" width="4" height="6" fill="#6a5a40"/><rect x="2.2" y="13" width="2.4" height="3" fill="#7f9a86"/><rect x="23.2" y="11.8" width="4.4" height="6" fill="#ece6dc"/><rect x="27.4" y="11.8" width="5.8" height="11" fill="#5a5a40"/><rect x="29" y="15" width="1" height="8" fill="#2f2f22"/><rect x="18" y="14" width="5.6" height="2.4" fill="#d4a452"/><rect x="7" y="15.4" width="7" height="3" fill="#9a8a62"/><rect x="8.6" y="17" width="1.8" height="6" fill="#d98a58"/><rect x="11.8" y="16.6" width="1.8" height="6" fill="#8a5a48"/><rect x="13.6" y="14.6" width="1.6" height="4" fill="#a04a3a"/><rect x="15.8" y="16" width="2" height="6" fill="#5a5a6a"/><rect x="18.6" y="16.6" width="2.2" height="6" fill="#e0b89c"/><rect x="22" y="16.4" width="1.8" height="6" fill="#d9a080"/><rect x="24.6" y="17.4" width="1.8" height="5" fill="#b8826a"/><rect x="12.8" y="21" width="2" height="2" fill="#2a2a30"/><rect x="17.6" y="21" width="2" height="2" fill="#2a2a30"/></g></g>
<g transform="translate(698.8 588.2)"><rect x=".5" y=".5" width="33.2" height="30" fill="#fff" stroke="#ececec" stroke-width="1"/><rect x="1.6" y="2" width="2.6" height="1.8" rx=".5" fill="#f4311c"/><text x="4.6" y="3.8" font-family="Liberation Sans, sans-serif" font-weight="bold" font-size="2.3" fill="#222" stroke="#222" stroke-width=".25" textLength="5.4" lengthAdjust="spacingAndGlyphs">YouTube</text><rect x="1" y="4.7" width="32.2" height=".4" fill="#ececec"/><circle cx="26.4" cy="2.9" r=".6" fill="none" stroke="#c9c9c9" stroke-width=".3"/><circle cx="30.9" cy="2.9" r=".8" fill="none" stroke="#bdbdbd" stroke-width=".3"/><rect x="1" y="4.7" width="32.2" height=".4" fill="#ececec"/><rect x="2.2" y="6" width="8" height="2.6" rx=".5" fill="#ededed"/><circle cx="3.6" cy="7.3" r=".7" fill="#666"/><text x="5" y="8" font-family="Liberation Sans, sans-serif" font-size="1.6" font-weight="bold" fill="#444">Explore</text><rect x="12.4" y="5.9" width="4.4" height="2.8" rx="1.4" fill="#4f4f4f"/><text x="14.6" y="8" font-family="Liberation Sans, sans-serif" font-size="1.6" fill="#fff" text-anchor="middle">All</text><rect x="17.9" y="6" width="4.8" height="2.6" rx="1.3" fill="#efefef"/><text x="20.3" y="8" font-family="Liberation Sans, sans-serif" font-size="1.6" fill="#555" text-anchor="middle">Live</text><rect x="23.8" y="6" width="7" height="2.6" rx="1.3" fill="#efefef"/><text x="27.3" y="8" font-family="Liberation Sans, sans-serif" font-size="1.6" font-weight="bold" fill="#555" text-anchor="middle">Gaming</text><rect x="1" y="9.6" width="32.2" height="14" fill="#000"/><g filter="url(#b3)"><rect x="1" y="11.8" width="32.2" height="12" fill="#c79676"/><rect x="6.5" y="11.8" width="17" height="3.6" fill="url(#sky2)"/><rect x="1" y="11.8" width="6.2" height="8" fill="#4f6558"/><rect x="1" y="17" width="4" height="6" fill="#6a5a40"/><rect x="2.2" y="13" width="2.4" height="3" fill="#7f9a86"/><rect x="23.2" y="11.8" width="4.4" height="6" fill="#ece6dc"/><rect x="27.4" y="11.8" width="5.8" height="11" fill="#5a5a40"/><rect x="29" y="15" width="1" height="8" fill="#2f2f22"/><rect x="18" y="14" width="5.6" height="2.4" fill="#d4a452"/><rect x="7" y="15.4" width="7" height="3" fill="#9a8a62"/><rect x="8.6" y="17" width="1.8" height="6" fill="#d98a58"/><rect x="11.8" y="16.6" width="1.8" height="6" fill="#8a5a48"/><rect x="13.6" y="14.6" width="1.6" height="4" fill="#a04a3a"/><rect x="15.8" y="16" width="2" height="6" fill="#5a5a6a"/><rect x="18.6" y="16.6" width="2.2" height="6" fill="#e0b89c"/><rect x="22" y="16.4" width="1.8" height="6" fill="#d9a080"/><rect x="24.6" y="17.4" width="1.8" height="5" fill="#b8826a"/><rect x="12.8" y="21" width="2" height="2" fill="#2a2a30"/><rect x="17.6" y="21" width="2" height="2" fill="#2a2a30"/></g></g>
<g transform="translate(757.8 588.2)"><rect x=".5" y=".5" width="33.2" height="30" fill="#fff" stroke="#ececec" stroke-width="1"/><rect x="1.6" y="2" width="2.6" height="1.8" rx=".5" fill="#f4311c"/><text x="4.6" y="3.8" font-family="Liberation Sans, sans-serif" font-weight="bold" font-size="2.3" fill="#222" stroke="#222" stroke-width=".25" textLength="5.4" lengthAdjust="spacingAndGlyphs">YouTube</text><rect x="1" y="4.7" width="32.2" height=".4" fill="#ececec"/><circle cx="26.4" cy="2.9" r=".6" fill="none" stroke="#c9c9c9" stroke-width=".3"/><circle cx="30.9" cy="2.9" r=".8" fill="none" stroke="#bdbdbd" stroke-width=".3"/><rect x="1" y="4.7" width="32.2" height=".4" fill="#ececec"/><rect x="2.2" y="6" width="8" height="2.6" rx=".5" fill="#ededed"/><circle cx="3.6" cy="7.3" r=".7" fill="#666"/><text x="5" y="8" font-family="Liberation Sans, sans-serif" font-size="1.6" font-weight="bold" fill="#444">Explore</text><rect x="12.4" y="5.9" width="4.4" height="2.8" rx="1.4" fill="#4f4f4f"/><text x="14.6" y="8" font-family="Liberation Sans, sans-serif" font-size="1.6" fill="#fff" text-anchor="middle">All</text><rect x="17.9" y="6" width="4.8" height="2.6" rx="1.3" fill="#efefef"/><text x="20.3" y="8" font-family="Liberation Sans, sans-serif" font-size="1.6" fill="#555" text-anchor="middle">Live</text><rect x="23.8" y="6" width="7" height="2.6" rx="1.3" fill="#efefef"/><text x="27.3" y="8" font-family="Liberation Sans, sans-serif" font-size="1.6" font-weight="bold" fill="#555" text-anchor="middle">Gaming</text><rect x="1" y="9.6" width="32.2" height="14" fill="#000"/><g filter="url(#b3)"><rect x="1" y="11.8" width="32.2" height="12" fill="#c79676"/><rect x="6.5" y="11.8" width="17" height="3.6" fill="url(#sky2)"/><rect x="1" y="11.8" width="6.2" height="8" fill="#4f6558"/><rect x="1" y="17" width="4" height="6" fill="#6a5a40"/><rect x="2.2" y="13" width="2.4" height="3" fill="#7f9a86"/><rect x="23.2" y="11.8" width="4.4" height="6" fill="#ece6dc"/><rect x="27.4" y="11.8" width="5.8" height="11" fill="#5a5a40"/><rect x="29" y="15" width="1" height="8" fill="#2f2f22"/><rect x="18" y="14" width="5.6" height="2.4" fill="#d4a452"/><rect x="7" y="15.4" width="7" height="3" fill="#9a8a62"/><rect x="8.6" y="17" width="1.8" height="6" fill="#d98a58"/><rect x="11.8" y="16.6" width="1.8" height="6" fill="#8a5a48"/><rect x="13.6" y="14.6" width="1.6" height="4" fill="#a04a3a"/><rect x="15.8" y="16" width="2" height="6" fill="#5a5a6a"/><rect x="18.6" y="16.6" width="2.2" height="6" fill="#e0b89c"/><rect x="22" y="16.4" width="1.8" height="6" fill="#d9a080"/><rect x="24.6" y="17.4" width="1.8" height="5" fill="#b8826a"/><rect x="12.8" y="21" width="2" height="2" fill="#2a2a30"/><rect x="17.6" y="21" width="2" height="2" fill="#2a2a30"/></g></g>
<g transform="translate(816.8 588.2)"><rect x=".5" y=".5" width="33.2" height="30" fill="#fff" stroke="#ececec" stroke-width="1"/><rect x="1.6" y="2" width="2.6" height="1.8" rx=".5" fill="#f4311c"/><text x="4.6" y="3.8" font-family="Liberation Sans, sans-serif" font-weight="bold" font-size="2.3" fill="#222" stroke="#222" stroke-width=".25" textLength="5.4" lengthAdjust="spacingAndGlyphs">YouTube</text><rect x="1" y="4.7" width="32.2" height=".4" fill="#ececec"/><circle cx="26.4" cy="2.9" r=".6" fill="none" stroke="#c9c9c9" stroke-width=".3"/><circle cx="30.9" cy="2.9" r=".8" fill="none" stroke="#bdbdbd" stroke-width=".3"/><rect x="1" y="4.7" width="32.2" height=".4" fill="#ececec"/><rect x="2.2" y="6" width="8" height="2.6" rx=".5" fill="#ededed"/><circle cx="3.6" cy="7.3" r=".7" fill="#666"/><text x="5" y="8" font-family="Liberation Sans, sans-serif" font-size="1.6" font-weight="bold" fill="#444">Explore</text><rect x="12.4" y="5.9" width="4.4" height="2.8" rx="1.4" fill="#4f4f4f"/><text x="14.6" y="8" font-family="Liberation Sans, sans-serif" font-size="1.6" fill="#fff" text-anchor="middle">All</text><rect x="17.9" y="6" width="4.8" height="2.6" rx="1.3" fill="#efefef"/><text x="20.3" y="8" font-family="Liberation Sans, sans-serif" font-size="1.6" fill="#555" text-anchor="middle">Live</text><rect x="23.8" y="6" width="7" height="2.6" rx="1.3" fill="#efefef"/><text x="27.3" y="8" font-family="Liberation Sans, sans-serif" font-size="1.6" font-weight="bold" fill="#555" text-anchor="middle">Gaming</text><rect x="1" y="9.6" width="32.2" height="14" fill="#000"/><g filter="url(#b3)"><rect x="1" y="11.8" width="32.2" height="12" fill="#c79676"/><rect x="6.5" y="11.8" width="17" height="3.6" fill="url(#sky2)"/><rect x="1" y="11.8" width="6.2" height="8" fill="#4f6558"/><rect x="1" y="17" width="4" height="6" fill="#6a5a40"/><rect x="2.2" y="13" width="2.4" height="3" fill="#7f9a86"/><rect x="23.2" y="11.8" width="4.4" height="6" fill="#ece6dc"/><rect x="27.4" y="11.8" width="5.8" height="11" fill="#5a5a40"/><rect x="29" y="15" width="1" height="8" fill="#2f2f22"/><rect x="18" y="14" width="5.6" height="2.4" fill="#d4a452"/><rect x="7" y="15.4" width="7" height="3" fill="#9a8a62"/><rect x="8.6" y="17" width="1.8" height="6" fill="#d98a58"/><rect x="11.8" y="16.6" width="1.8" height="6" fill="#8a5a48"/><rect x="13.6" y="14.6" width="1.6" height="4" fill="#a04a3a"/><rect x="15.8" y="16" width="2" height="6" fill="#5a5a6a"/><rect x="18.6" y="16.6" width="2.2" height="6" fill="#e0b89c"/><rect x="22" y="16.4" width="1.8" height="6" fill="#d9a080"/><rect x="24.6" y="17.4" width="1.8" height="5" fill="#b8826a"/><rect x="12.8" y="21" width="2" height="2" fill="#2a2a30"/><rect x="17.6" y="21" width="2" height="2" fill="#2a2a30"/></g></g>
</svg>

</div>
</body>
</html>
